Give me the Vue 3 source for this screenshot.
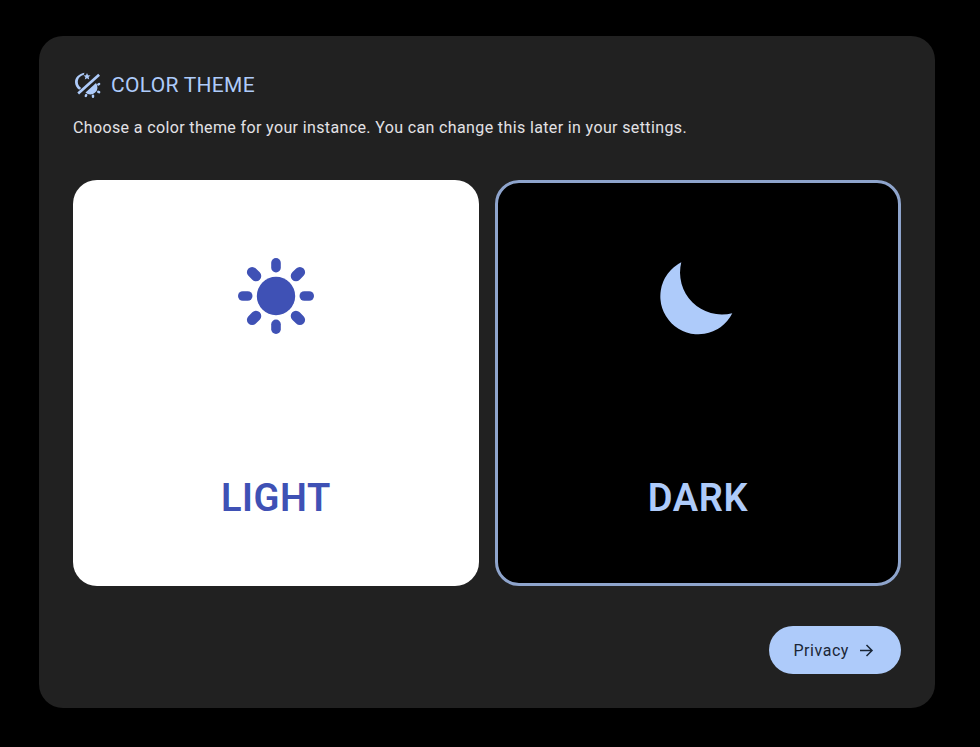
<script setup>
const rays = [
  { angle: 0, width: 9.6, y: 10, length: 14.5 },
  { angle: 45, width: 10.5, y: 9, length: 16 },
  { angle: 90, width: 9.6, y: 10, length: 14.5 },
  { angle: 135, width: 10.5, y: 9, length: 16 },
  { angle: 180, width: 9.6, y: 10, length: 14.5 },
  { angle: 225, width: 10.5, y: 9, length: 16 },
  { angle: 270, width: 9.6, y: 10, length: 14.5 },
  { angle: 315, width: 10.5, y: 9, length: 16 }
]
</script>

<template>
  <div class="page">
    <section class="panel">
      <div class="title-row">
        <svg class="title-icon" viewBox="0 0 28 28" fill="#aecbfa">
          <path d="M11.500 1.800C6 2.800 2 6.400 2 11c0 3 1.500 5.800 4.200 7.800l2-1.900C6 15.500 4.800 13.400 4.800 11c0-3.600 2.700-6.300 6-7.200.2-.7.400-1.300.7-2z" />
          <path d="M14 2l1 2.300 2.500.2-1.900 1.600.6 2.500-2.200-1.400-2.200 1.400.6-2.500-1.900-1.600 2.500-.2z" />
          <path d="M4.300 21.600L25.200 2.700l1.800 2L6.100 23.600z" />
          <path d="M12.500 21.500L23 12A7.100 7.100 0 0 1 12.500 21.500Z" />
          <rect x="18.800" y="23.400" width="2.400" height="3.600" rx="1.200" />
          <rect x="11.800" y="22.800" width="2.400" height="3.400" rx="1.200" transform="rotate(25 13 24.500)" />
          <rect x="24" y="19.800" width="3.400" height="2.400" rx="1.200" transform="rotate(25 25.700 21)" />
          <rect x="24" y="12" width="3.400" height="2.400" rx="1.200" transform="rotate(-30 25.700 13.200)" />
        </svg>
        <h2 class="title">COLOR THEME</h2>
      </div>
      <p class="subtitle">Choose a color theme for your instance. You can change this later in your settings.</p>

      <div class="themes">
        <button class="theme light">
          <svg class="theme-icon" viewBox="0 0 96 96" fill="currentColor">
            <circle cx="48" cy="48" r="19.200" />
            <rect
              v-for="ray in rays"
              :key="ray.angle"
              :x="48 - ray.width / 2"
              :y="ray.y"
              :width="ray.width"
              :height="ray.length"
              :rx="ray.width / 2"
              :transform="`rotate(${ray.angle} 48 48)`"
            />
          </svg>
          <span class="theme-label">LIGHT</span>
        </button>
        <button class="theme dark">
          <svg class="theme-icon" viewBox="0 0 96 96" fill="currentColor">
            <path d="M31.300 14.300A38 38 0 1 0 82.300 65.300A42 42 0 0 1 31.300 14.300Z" />
          </svg>
          <span class="theme-label">DARK</span>
        </button>
      </div>

      <div class="actions">
        <button class="next">
          <span>Privacy</span>
          <svg class="arrow" viewBox="0 0 18 18" fill="none" stroke="currentColor" stroke-width="1.500">
            <path d="M1 9.500H13M7.500 4L13 9.500L7.500 15" />
          </svg>
        </button>
      </div>
    </section>
  </div>
</template>

<style scoped>
.page {
  padding: 36px 45px 39px 39px;
}

.panel {
  box-sizing: border-box;
  width: 896px;
  height: 672px;
  padding: 34px;
  border-radius: 24px;
  background: #212121;
  font-family: Roboto, sans-serif;
}

.title-row {
  display: flex;
  align-items: center;
  gap: 10px;
  height: 28px;
  margin-top: 1px;
}

.title-icon {
  width: 28px;
  height: 28px;
}

.title {
  margin: 0;
  font-size: 21px;
  font-weight: 400;
  letter-spacing: 0.3px;
  color: #aecbfa;
}

.subtitle {
  margin: 17px 0 0;
  font-size: 16px;
  line-height: 24px;
  letter-spacing: 0.37px;
  color: #e3e2e6;
}

.themes {
  display: grid;
  grid-template-columns: 406px 406px;
  gap: 16px;
  margin-top: 40px;
}

.theme {
  box-sizing: border-box;
  display: flex;
  flex-direction: column;
  align-items: center;
  height: 406px;
  padding: 65px 0 0;
  border: 3px solid transparent;
  border-radius: 24px;
  font-family: inherit;
}

.light {
  background: #fff;
  color: #3f51b5;
}

.dark {
  background: #000;
  border-color: #8ea4cc;
  color: #aecbfa;
}

.theme-icon {
  width: 96px;
  height: 96px;
}

.theme-label {
  margin-top: 132px;
  font-size: 38px;
  line-height: 44px;
  font-weight: 600;
  letter-spacing: 0.6px;
}

.actions {
  display: flex;
  justify-content: flex-end;
  margin-top: 40px;
}

.next {
  display: flex;
  align-items: center;
  gap: 10px;
  height: 48px;
  padding: 0 24px;
  border: none;
  border-radius: 24px;
  background: #aecbfa;
  color: #1a2636;
  font-family: inherit;
  font-size: 16px;
  font-weight: 450;
  letter-spacing: 0.55px;
}

.arrow {
  width: 18px;
  height: 18px;
}
</style>

<style>
html,
body {
  background: #000;
}
</style>
